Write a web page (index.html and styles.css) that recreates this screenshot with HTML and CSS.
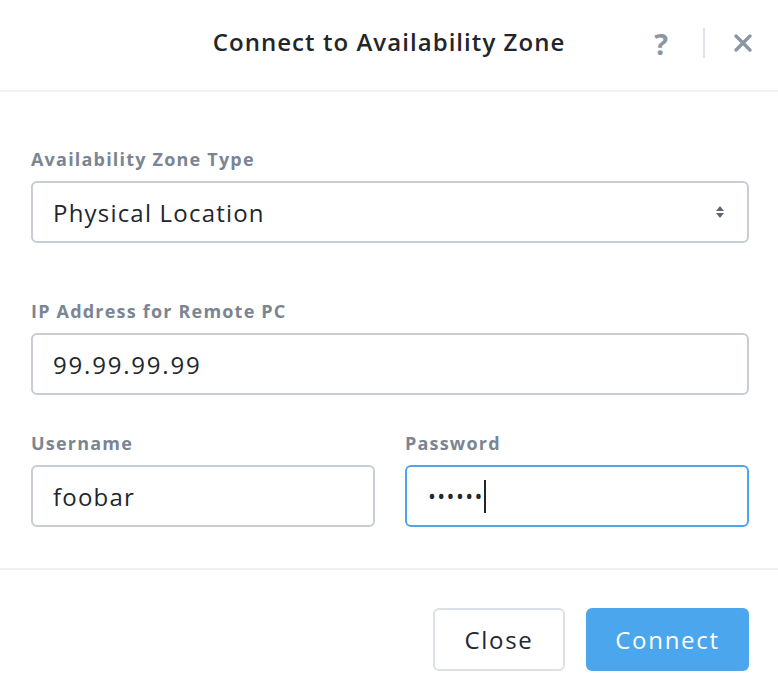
FILE: index.html
```html
<!DOCTYPE html>
<html lang="en">
<head>
<meta charset="utf-8">
<title>Connect to Availability Zone</title>
<link rel="stylesheet" href="styles.css">
</head>
<body>
<div class="dialog">
  <header class="dialog-header">
    <span class="spacer"></span>
    <h1 class="dialog-title">Connect to Availability Zone</h1>
    <div class="header-actions">
      <span class="help">?</span>
      <span class="divider"></span>
      <svg class="close-icon" width="20" height="20" viewBox="0 0 20 20">
        <path d="M3 3 L17 17 M17 3 L3 17" stroke="#8c96a3" stroke-width="3.4" stroke-linecap="round" fill="none"/>
      </svg>
    </div>
  </header>

  <main class="dialog-body">
    <div class="field field-type">
      <label class="field-label">Availability Zone Type</label>
      <div class="control select">
        <span>Physical Location</span>
        <svg class="select-arrows" width="10" height="16" viewBox="0 0 10 16">
          <path d="M5 2 L9 7 H1 Z" fill="#5d6671"/>
          <path d="M5 14 L9 9 H1 Z" fill="#5d6671"/>
        </svg>
      </div>
    </div>

    <div class="field field-ip">
      <label class="field-label">IP Address for Remote PC</label>
      <div class="control ip">99.99.99.99</div>
    </div>

    <div class="field-row">
      <div class="field">
        <label class="field-label">Username</label>
        <div class="control">foobar</div>
      </div>
      <div class="field">
        <label class="field-label">Password</label>
        <div class="control focused"><span class="dots">••••••</span><span class="caret"></span></div>
      </div>
    </div>
  </main>

  <footer class="dialog-footer">
    <button class="btn btn-default">Close</button>
    <button class="btn btn-primary">Connect</button>
  </footer>
</div>
</body>
</html>
```
FILE: styles.css
```css
* {
  box-sizing: border-box;
}

html, body {
  margin: 0;
  padding: 0;
  background: #ffffff;
}

body {
  font-family: "Open Sans", Lato, sans-serif;
  color: #22272e;
}

.dialog {
  width: 778px;
  height: 700px;
  display: flex;
  flex-direction: column;
}

/* header */
.dialog-header {
  height: 92px;
  border-bottom: 2px solid #f2f2f2;
  display: grid;
  grid-template-columns: 1fr auto 1fr;
  align-items: center;
  padding-bottom: 7px;
}

.dialog-title {
  margin: 0;
  font-size: 24px;
  font-weight: 600;
  color: #22262b;
  letter-spacing: 1.05px;
}

.header-actions {
  display: flex;
  align-items: center;
  justify-content: flex-end;
  padding-right: 25px;
  margin-top: 3px;
}

.help {
  font-size: 29px;
  font-weight: 700;
  color: #8c96a3;
  line-height: 1;
}

.divider {
  width: 2px;
  height: 30px;
  background: #e0e3e7;
  margin: 0 28px 0 35px;
}

.close-icon {
  display: block;
}

/* body */
.dialog-body {
  padding: 56px 29px 0 31px;
  border-bottom: 2px solid #f0f0f0;
  height: 478px;
}

.field {
  display: flex;
  flex-direction: column;
  gap: 11px;
}

.field-ip {
  margin-top: 57px;
}

.field-row {
  margin-top: 37px;
  display: grid;
  grid-template-columns: 1fr 1fr;
  gap: 30px;
}

.field-label {
  font-size: 18px;
  font-weight: 700;
  color: #7b8592;
  line-height: 22px;
  letter-spacing: 1.2px;
}

.control {
  height: 62px;
  border: 2px solid #c8ccd3;
  border-radius: 6px;
  padding: 0 20px;
  display: flex;
  align-items: center;
  font-size: 24px;
  letter-spacing: 1.2px;
  color: #22272e;
}

.control.ip {
  letter-spacing: 1.8px;
}

.select {
  justify-content: space-between;
  padding-right: 22px;
}

.focused {
  border-color: #4ea5ec;
}

.dots {
  font-size: 21px;
  letter-spacing: 1.4px;
  margin-left: 1px;
}

.caret {
  width: 2px;
  height: 33px;
  background: #22272e;
  margin-left: 0;
}

/* footer */
.dialog-footer {
  display: flex;
  justify-content: flex-end;
  gap: 21px;
  padding: 38px 29px 0 0;
}

.btn {
  height: 63px;
  border-radius: 6px;
  font-family: "Open Sans", Lato, sans-serif;
  font-size: 24px;
  letter-spacing: 1.7px;
  padding: 0;
  cursor: pointer;
}

.btn-default {
  width: 132px;
  background: #ffffff;
  border: 2px solid #dcdfe3;
  color: #22272e;
}

.btn-primary {
  width: 163px;
  background: #4ca6ed;
  border: none;
  color: #ffffff;
}
```
